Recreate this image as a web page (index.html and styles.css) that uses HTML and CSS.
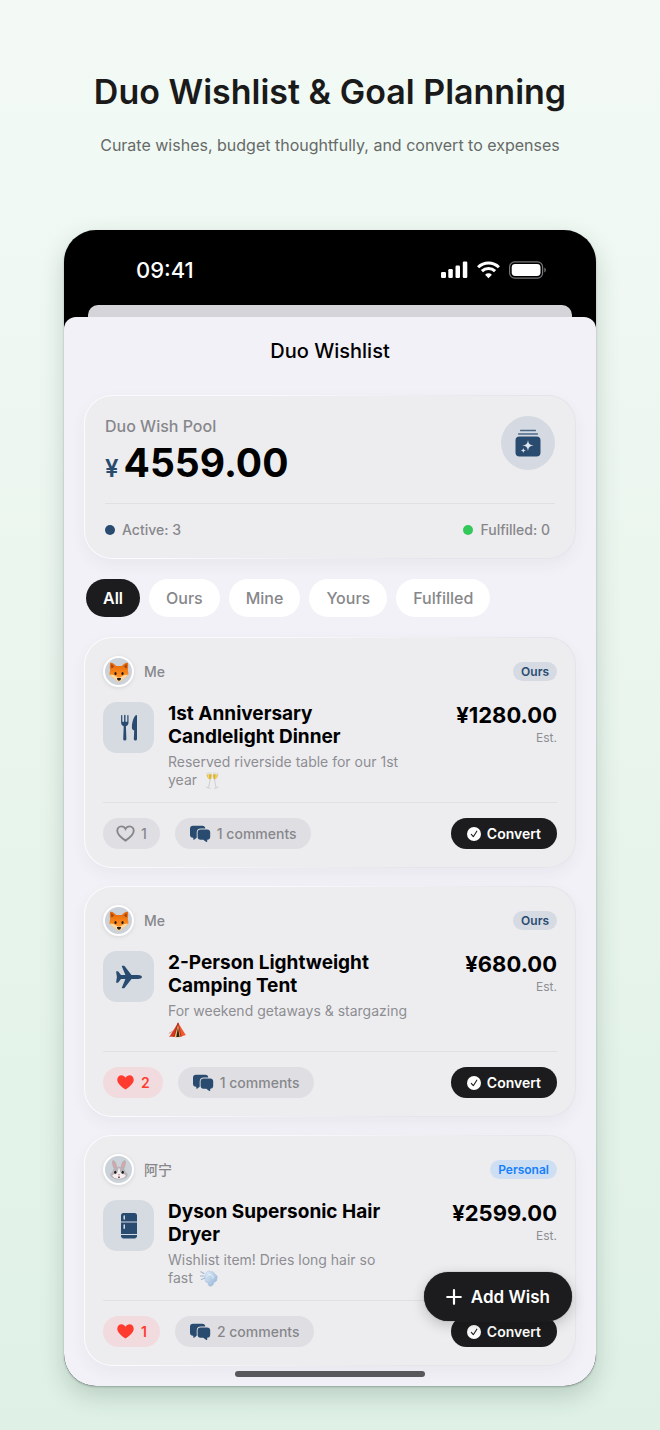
FILE: index.html
```html
<!DOCTYPE html>
<html lang="en">
<head>
<meta charset="utf-8">
<meta name="viewport" content="width=device-width, initial-scale=1">
<title>Duo Wishlist &amp; Goal Planning</title>
<link rel="stylesheet" href="styles.css">
</head>
<body>
<svg class="sprite" aria-hidden="true">
  <defs>
    <linearGradient id="foxFur" x1="0" y1="0" x2="0" y2="1"><stop offset="0" stop-color="#e2650c"/><stop offset=".6" stop-color="#f98a1c"/><stop offset="1" stop-color="#ffa94a"/></linearGradient>
    <linearGradient id="puff" x1="0" y1="0" x2="1" y2="1"><stop offset="0" stop-color="#e4f0fb"/><stop offset="1" stop-color="#8fb0d4"/></linearGradient>
  </defs>
  <symbol id="fox" viewBox="0 0 20 20">
    <path d="M1.400 .7C.8 1 .6 5 1.200 8c-.5 2.300-1 4-.4 5 1.600 2.200 5.200 4 7.400 6.200.9.800 2.700.800 3.600 0 2.200-2.200 5.800-4 7.400-6.200.6-1 .1-2.700-.4-5 .6-3 .4-7-.2-7.300C16.500.3 14 2.500 12.800 4h-5.600C6 2.500 3.500.3 1.400.7z" fill="url(#foxFur)"/>
    <path d="M2.300 2.200c-.3 1.800-.1 3.300.3 4.300.9-.9 1.900-1.300 2.400-1.800-.8-.9-1.600-2.100-2.700-2.500zM17.700 2.200c.3 1.800.1 3.300-.3 4.300-.9-.9-1.900-1.300-2.400-1.800.8-.9 1.600-2.100 2.700-2.500z" fill="#a3420f"/>
    <path d="M.8 13c1.600-.5 3.900-.1 5.900 1.300L10 16l3.300-1.700c2-1.400 4.300-1.800 5.900-1.300-1.600 2.200-5.200 4-7.400 6.200-.9.800-2.700.8-3.600 0C6 17 2.400 15.200.8 13z" fill="#f9d9a6"/>
    <path d="M8 16h4c.3 1.300-1.200 2.800-2 2.800S7.700 17.300 8 16z" fill="#251a18"/>
    <ellipse cx="6.500" cy="11.600" rx="1.100" ry="1.500" fill="#26150d"/><ellipse cx="13.500" cy="11.600" rx="1.100" ry="1.500" fill="#26150d"/>
  </symbol>
  <symbol id="rabbit" viewBox="0 0 20 20">
    <path d="M5 9C3 5 2.500 1 4 .3 6 0 8 4 8 7.500h4C12 4 14 0 16 .3c1.500.7 1 4.700-1 8.700z" fill="#b9adb0"/>
    <path d="M5.500 7.500C4.300 4.600 3.900 2.300 4.500 1.700c1.100.2 2.400 3 2.400 5.500zM14.500 7.500c1.200-2.900 1.600-5.200 1-5.800-1.100.2-2.400 3-2.400 5.500z" fill="#e0a3a8"/>
    <path d="M10 6.800c-4.500 0-6 2.600-6.600 5.200C2.700 12.700 1 13.500 1.300 15c.5 2.800 4.500 4.500 8.700 4.500s8.200-1.700 8.700-4.500c.3-1.500-1.400-2.300-2.100-3-.6-2.600-2.100-5.200-6.600-5.200z" fill="#b9b2b6"/>
    <path d="M10 7.500c-1 1.500-.8 4-2 5.800-1.500.8-4.300 1-4.700 2.200.7 2.200 3.900 3.200 6.700 3.200s6-1 6.700-3.200c-.4-1.200-3.200-1.400-4.700-2.200-1.200-1.800-1-4.300-2-5.800z" fill="#f3f0f1"/>
    <ellipse cx="6.300" cy="12.300" rx="1.100" ry="1.500" fill="#18171b"/><ellipse cx="13.700" cy="12.300" rx="1.100" ry="1.500" fill="#18171b"/>
    <path d="M8.800 14.300h2.400L10 15.700z" fill="#e36f84"/><path d="M9.200 16.500h1.600v1.500H9.200z" fill="#7b2a35"/>
  </symbol>
  <symbol id="glasses" viewBox="0 0 16 17">
    <g id="flute"><path d="M2.500 1.400 7 .5c1 2.700.9 6-.8 7.300-2-.6-3.600-3.300-3.700-6.400z" fill="#e9e7dd" stroke="#cfcabb" stroke-width=".4"/><path d="M2.800 3 7.200 2c.5 2.300.3 4.500-1 5.500C4.500 6.900 3.200 5.200 2.800 3z" fill="#dfb32c"/><path d="M3.600 3.200 5 2.900c0 1.600.3 2.900.7 3.900-1-.6-1.800-2-2.100-3.600z" fill="#f6dd74"/><path d="M6.100 7.800 4.600 15.200M2.400 15.300l4 1" fill="none" stroke="#c9c9cc" stroke-width=".9"/></g>
    <use href="#flute" transform="matrix(-1 0 0 1 16.600 0)"/>
  </symbol>
  <symbol id="tent" viewBox="0 0 18 16">
    <path d="M9.600.8 1 14.500l7.500.8z" fill="#d93b22"/><path d="M9.600.8 17.300 13l-6.800 2.200z" fill="#f1592f"/><path d="M9.600 2.500 6 15l5.800.2z" fill="#efc46a"/><path d="M9.500 5 7.800 15.100l3.300-.2z" fill="#31251d"/><path d="m9.600.8 3 14M9.600.8 5.300 15" stroke="#a92716" stroke-width=".8" fill="none"/><path d="M.3 11.500 4.500 9M.5 14.800l1.500-.6" stroke="#c96843" stroke-width=".6"/>
  </symbol>
  <symbol id="dash" viewBox="0 0 18 17">
    <path d="M6 4.600C5.600 1.600 9 .2 10.600 1.900c2-.8 4 .3 3.900 2.400 2.200.3 3.500 2.600 2.300 4.400.4 2-1 3.400-2.900 3.300.2 2.400-1.800 4.700-4.400 4-1.700-.6-1.700-2.400-.6-3.200C6 13 4.500 11 5.700 9.200c-1.600-1-1.400-3.800.3-4.600z" fill="url(#puff)" stroke="#9db6d2" stroke-width=".5"/>
    <path d="M8 5.300c1-1.500 3-1.300 3.500.2 1.500.2 2.200 1.600 1.500 2.800" fill="none" stroke="#f5faff" stroke-width="1" stroke-linecap="round" opacity=".8"/>
    <path d="M.8 1.800 4 3.500M.5 6h3.300M1.500 9.500 4.500 8.200" stroke="#9db8d4" stroke-width="1.200" stroke-linecap="round"/>
  </symbol>
  <symbol id="fork" viewBox="0 0 18 28">
    <path d="M1.100 1.500v7.200c0 2 1.200 3 2.600 3.600L3.200 25a1.600 1.600 0 0 0 3.200 0l-.5-12.700c1.400-.6 2.600-1.600 2.600-3.600V1.500a.6.6 0 0 0-1.200 0v6.300H5.500V1.400a.7.700 0 0 0-1.400 0v6.400H2.300V1.500a.6.6 0 0 0-1.200 0zM17 1.700v23.200a1.600 1.600 0 0 1-3.200 0l.4-8.400c-1.500-.6-2.300-1.300-2.300-3C11.900 7.500 14 2.500 16 1c.5-.3 1 0 1 .7z" fill="currentColor"/>
  </symbol>
  <symbol id="plane" viewBox="0 0 28 26">
    <path d="M27 13c0 1.200-2 2-4 2h-6.500l-6.800 8.700c-.3.400-.7.500-1.200.5H7.300c-.4 0-.6-.4-.4-.8L10.400 15H6l-2.700 3.400c-.2.300-.5.400-.8.400h-.9c-.3 0-.5-.3-.5-.6L1.900 13l-.8-5.200c0-.3.200-.6.500-.6h.9c.3 0 .6.100.8.400L6 11h4.400L6.900 2.600c-.2-.4 0-.8.400-.8h1.200c.5 0 .9.100 1.200.5l6.800 8.700H23c2 0 4 .8 4 2z" fill="currentColor"/>
  </symbol>
  <symbol id="fridge" viewBox="0 0 18 28">
    <path d="M1 9.500V3.400C1 1.900 1.900 1 3.400 1h11.200C16.100 1 17 1.900 17 3.400v6.100zM1 10.600h16V22H1zM1 23.100h16v.9c0 1.200-.6 1.900-1.600 2.100v.5H2.600v-.5C1.600 25.900 1 25.200 1 24z" fill="currentColor"/><path d="M4.200 4v3M4.200 13v3.300" stroke="#eceff4" stroke-width="1.300" stroke-linecap="round"/>
  </symbol>
  <symbol id="bubbles" viewBox="0 0 22 18">
    <path d="M4 .8h9.400c1.700 0 2.800 1 2.900 2.600h-4.600c-2.500 0-4 1.500-4 4v5.300l-2.600 2c-.4.300-.8.100-.8-.4v-1.600H4C2.100 12.700 1 11.500 1 9.700V3.800C1 2 2.100.8 4 .8z" fill="currentColor"/>
    <path d="M11.500 4.400h6.700c1.900 0 3 1.100 3 2.900v4.500c0 1.800-1.100 2.900-3 2.900v1.800c0 .5-.5.700-.9.400l-3-2.200h-2.800c-1.800 0-2.900-1.100-2.900-2.900V7.300c0-1.800 1.100-2.900 2.900-2.900z" fill="currentColor"/>
  </symbol>
  <symbol id="heart" viewBox="0 0 20 18">
    <path d="M10 16.500C5.800 13.800 1.300 10.300 1.300 6.200c0-2.700 1.900-4.800 4.400-4.800 1.800 0 3.400 1 4.300 2.700.9-1.700 2.500-2.700 4.300-2.700 2.500 0 4.400 2.100 4.400 4.800 0 4.100-4.500 7.600-8.700 10.300z"/>
  </symbol>
  <symbol id="check" viewBox="0 0 14 14">
    <circle cx="7" cy="7" r="7" fill="#fff"/><path d="m4.300 7.300 2 2.400 3.500-5.500" fill="none" stroke="#1c1c1e" stroke-width="1.100" stroke-linecap="round" stroke-linejoin="round"/>
  </symbol>
</svg>

<header class="hero">
  <h1 class="hero-title">Duo Wishlist &amp; Goal Planning</h1>
  <p class="hero-subtitle">Curate wishes, budget thoughtfully, and convert to expenses</p>
</header>

<main class="phone">
  <div class="status-bar">
    <span class="clock">09:41</span>
    <div class="status-icons">
      <svg width="27" height="18" viewBox="0 0 27 18" fill="#fff" aria-label="Signal"><rect x="0" y="11" width="5" height="6" rx="1.200"/><rect x="7.300" y="8" width="4.500" height="9" rx="1.200"/><rect x="14.500" y="4.500" width="4.500" height="12.500" rx="1.200"/><rect x="21.800" y="0.500" width="4.500" height="16.500" rx="1.200"/></svg>
      <svg width="23" height="18" viewBox="0 0 23 18" aria-label="Wi-Fi"><g fill="none" stroke="#fff" stroke-width="3"><path d="M1.100 6.200a14.900 14.900 0 0 1 20.800 0"/><path d="M4.900 10.200a9.500 9.500 0 0 1 13.200 0"/></g><path d="M11.500 17.200 8.100 13.700a4.900 4.900 0 0 1 6.800 0z" fill="#fff"/></svg>
      <svg width="38" height="18" viewBox="0 0 38 18" aria-label="Battery"><rect x=".6" y=".9" width="33" height="16.200" rx="5" fill="none" stroke="#77777a" stroke-width="1.200"/><rect x="2.700" y="3" width="28.800" height="12" rx="3.400" fill="#fff"/><path d="M35.300 6.500c2 .8 2 4.200 0 5z" fill="#77777a"/></svg>
    </div>
  </div>
  <div class="sheet-behind"></div>
  <div class="sheet">
    <h2 class="sheet-title">Duo Wishlist</h2>

    <section class="card pool">
      <div class="pool-top">
        <div>
          <div class="pool-label">Duo Wish Pool</div>
          <div class="pool-total"><span class="pool-currency">¥</span><span>4559.00</span></div>
        </div>
        <div class="pool-icon">
          <svg width="26" height="28" viewBox="0 0 26 28" aria-hidden="true"><path d="M5.600 1.500h14.800M3.600 5h18.800" stroke="#4a6888" stroke-width="1.500" stroke-linecap="round"/><rect x=".5" y="7.500" width="25" height="20" rx="4" fill="#2a4b70"/><path d="M13 11c.6 4 1.500 5 5.800 5.600-4.300.6-5.200 1.600-5.800 5.800-.6-4.200-1.500-5.200-5.800-5.800C11.500 16 12.400 15 13 11zM8.300 18.800c.3 2 .8 2.400 2.800 2.700-2 .3-2.500.8-2.800 2.800-.3-2-.8-2.500-2.800-2.800 2-.3 2.500-.7 2.800-2.700z" fill="#dfe5ee"/></svg>
        </div>
      </div>
      <div class="pool-stats">
        <span class="stat"><i class="dot dot-active"></i>Active: 3</span>
        <span class="stat"><i class="dot dot-done"></i>Fulfilled: 0</span>
      </div>
    </section>

    <nav class="filters" aria-label="Filter wishes">
      <button class="chip chip-on" type="button">All</button>
      <button class="chip" type="button">Ours</button>
      <button class="chip" type="button">Mine</button>
      <button class="chip" type="button">Yours</button>
      <button class="chip" type="button">Fulfilled</button>
    </nav>

    <div class="wishes">
      <article class="card wish">
        <div class="owner"><span class="avatar"><svg width="20" height="20" role="img" aria-label="Fox"><use href="#fox"/></svg></span><span class="owner-name">Me</span><span class="tag">Ours</span></div>
        <div class="detail">
          <div class="category"><svg width="18" height="28" aria-hidden="true"><use href="#fork"/></svg></div>
          <div class="copy"><h3 class="wish-title">1st Anniversary Candlelight Dinner</h3><p class="note">Reserved riverside table for our 1st <span class="keep">year <svg class="emoji" width="16" height="17" role="img" aria-label="Clinking glasses"><use href="#glasses"/></svg></span></p></div>
          <div class="cost"><div class="price">¥1280.00</div><div class="est">Est.</div></div>
        </div>
        <div class="actions">
          <button class="pill" type="button" aria-label="Like, 1"><svg class="heart" width="19" height="17"><use href="#heart"/></svg>1</button>
          <button class="pill comments" type="button"><svg class="bubbles" width="22" height="18"><use href="#bubbles"/></svg>1 comments</button>
          <button class="convert" type="button"><svg width="14" height="14"><use href="#check"/></svg>Convert</button>
        </div>
      </article>

      <article class="card wish">
        <div class="owner"><span class="avatar"><svg width="20" height="20" role="img" aria-label="Fox"><use href="#fox"/></svg></span><span class="owner-name">Me</span><span class="tag">Ours</span></div>
        <div class="detail">
          <div class="category"><svg width="28" height="26" aria-hidden="true"><use href="#plane"/></svg></div>
          <div class="copy"><h3 class="wish-title">2-Person Lightweight Camping Tent</h3><p class="note">For weekend getaways &amp; stargazing <svg class="emoji emoji-alone" width="19" height="16" role="img" aria-label="Tent"><use href="#tent"/></svg></p></div>
          <div class="cost"><div class="price">¥680.00</div><div class="est">Est.</div></div>
        </div>
        <div class="actions">
          <button class="pill liked" type="button" aria-label="Liked, 2"><svg class="heart" width="19" height="17"><use href="#heart"/></svg>2</button>
          <button class="pill comments" type="button"><svg class="bubbles" width="22" height="18"><use href="#bubbles"/></svg>1 comments</button>
          <button class="convert" type="button"><svg width="14" height="14"><use href="#check"/></svg>Convert</button>
        </div>
      </article>

      <article class="card wish">
        <div class="owner"><span class="avatar"><svg width="20" height="20" role="img" aria-label="Rabbit"><use href="#rabbit"/></svg></span><span class="owner-name" lang="zh">阿宁</span><span class="tag tag-personal">Personal</span></div>
        <div class="detail">
          <div class="category"><svg width="18" height="28" aria-hidden="true"><use href="#fridge"/></svg></div>
          <div class="copy"><h3 class="wish-title">Dyson Supersonic Hair Dryer</h3><p class="note">Wishlist item! Dries long hair so <span class="keep">fast <svg class="emoji" width="18" height="17" role="img" aria-label="Puff of air"><use href="#dash"/></svg></span></p></div>
          <div class="cost"><div class="price">¥2599.00</div><div class="est">Est.</div></div>
        </div>
        <div class="actions">
          <button class="pill liked" type="button" aria-label="Liked, 1"><svg class="heart" width="19" height="17"><use href="#heart"/></svg>1</button>
          <button class="pill comments" type="button"><svg class="bubbles" width="22" height="18"><use href="#bubbles"/></svg>2 comments</button>
          <button class="convert" type="button"><svg width="14" height="14"><use href="#check"/></svg>Convert</button>
        </div>
      </article>
    </div>
  </div>
  <button class="add" type="button"><svg width="16" height="16" viewBox="0 0 16 16" aria-hidden="true"><path d="M8 1.200v13.600M1.200 8h13.600" stroke="#fff" stroke-width="2.200" stroke-linecap="round"/></svg>Add Wish</button>
  <div class="home-bar"></div>
</main>
</body>
</html>
```

FILE: styles.css
```css
:root {
  --navy: #2a4b70;
  --ink: #1c1c1e;
  --grey: #87878b;
  --line: #e0e0e3;
}

* { box-sizing: border-box; }

body {
  margin: 0;
  padding: 71px 64px 45px;
  min-height: 100vh;
  font-family: Inter, "Noto Sans CJK SC", sans-serif;
  color: #000;
  background: linear-gradient(180deg, #f3faf6 0%, #e9f5ed 50%, #dff1e6 100%);
}

h1, h2, h3, p { margin: 0; }
button { border: 0; font: inherit; cursor: pointer; }
svg { display: block; flex: none; }
.sprite { position: absolute; width: 0; height: 0; }

.hero { text-align: center; margin-bottom: 74px; }
.hero-title { font-size: 34px; line-height: 42px; font-weight: 600; color: #1a1a1a; white-space: nowrap; }
.hero-subtitle { margin-top: 21px; font-size: 16px; line-height: 22px; color: #666a68; white-space: nowrap; }

.phone {
  position: relative;
  overflow: hidden;
  border-radius: 32px;
  background: #000;
  box-shadow: 0 10px 24px rgba(30, 60, 45, .2), 0 1px 2px rgba(30, 60, 45, .3);
}

.status-bar { display: flex; justify-content: space-between; align-items: center; height: 75px; padding: 4px 49px 0 72px; }
.clock { color: #fff; font-size: 22px; font-weight: 500; line-height: 26px; }
.status-icons { display: flex; align-items: center; gap: 9px; }
.sheet-behind { height: 24px; margin: 0 24px -12px; border-radius: 10px 10px 0 0; background: #d5d4d9; }
.sheet { position: relative; padding: 20px 20px; border-radius: 12px 12px 0 0; background: #f2f1f7; }
.sheet-title { text-align: center; font-size: 20px; line-height: 28px; font-weight: 500; }

.card {
  border: 1px solid transparent;
  border-radius: 28px;
  background:
    linear-gradient(#ededf0, #ededf0) padding-box,
    linear-gradient(120deg, #fbfbfd 30%, #e5e5e9 75%) border-box;
  box-shadow: 0 6px 16px rgba(60, 60, 90, .05);
}

.pool { margin-top: 30px; padding: 20px 20px 18px; }
.pool-top { display: flex; justify-content: space-between; padding-bottom: 10px; border-bottom: 1px solid var(--line); }
.pool-label { color: var(--grey); font-size: 16px; line-height: 20px; font-weight: 500; }
.pool-total { display: flex; align-items: baseline; gap: 5px; margin-top: 3px; font-size: 39px; line-height: 48px; font-weight: 700; }
.pool-currency { color: var(--navy); font-size: 24px; font-weight: 600; }
.pool-icon { display: grid; place-items: center; width: 54px; height: 54px; border-radius: 50%; background: #d5dae2; }
.pool-stats { display: flex; justify-content: space-between; padding: 16px 5px 0 0; }
.stat { display: flex; align-items: center; gap: 7px; color: var(--grey); font-size: 14px; line-height: 20px; font-weight: 500; }
.dot { width: 10px; height: 10px; border-radius: 50%; }
.dot-active { background: var(--navy); }
.dot-done { background: #34c759; }

.filters { display: flex; gap: 9px; margin: 20px 2px; }
.chip { height: 38px; padding: 0 17px; border-radius: 19px; background: #fff; color: var(--grey); font-size: 16px; font-weight: 500; }
.chip-on { background: var(--ink); color: #fff; font-weight: 600; }

.wishes { display: flex; flex-direction: column; gap: 18px; }
.wish { padding: 18px; }
.owner { display: flex; align-items: center; gap: 10px; }
.avatar { display: grid; place-items: center; width: 31px; height: 31px; border: 2px solid #fff; border-radius: 50%; background: #ccd2d9; box-shadow: 0 1px 4px rgba(0, 0, 0, .1); }
.owner-name { color: var(--grey); font-size: 14px; line-height: 20px; font-weight: 500; }
.tag { margin-left: auto; padding: 0 8px; border-radius: 10px; background: #d6dbe3; color: var(--navy); font-size: 12px; line-height: 19px; font-weight: 600; }
.tag-personal { background: #cfdff3; color: #1680fb; }

.detail { display: flex; margin-top: 15px; padding-bottom: 13px; border-bottom: 1px solid var(--line); }
.category { display: grid; place-items: center; flex: none; width: 51px; height: 51px; margin-right: 14px; border-radius: 14px; background: #d6dbe2; color: var(--navy); }
.copy { flex: 0 1 250px; }
.wish-title { font-size: 19px; line-height: 23px; font-weight: 700; }
.note { margin-top: 5px; color: #8e8e92; font-size: 14px; line-height: 18px; }
.keep { white-space: nowrap; }
.emoji { display: inline-block; vertical-align: -4px; margin-left: 3px; }
.emoji-alone { margin-left: 0; }
.cost { margin-left: auto; text-align: right; }
.price { font-size: 22px; line-height: 26px; font-weight: 700; }
.est { margin-top: 2px; color: #8e8e92; font-size: 12px; line-height: 16px; }

.actions { display: flex; align-items: center; gap: 15px; margin-top: 15px; }
.pill, .convert { display: flex; align-items: center; height: 31px; border-radius: 16px; }
.pill { gap: 6px; padding: 0 13px; background: #dfdfe3; color: var(--grey); font-size: 14px; font-weight: 500; }
.comments { padding: 0 14px; }
.bubbles { color: var(--navy); }
.heart { fill: none; stroke: var(--grey); stroke-width: 2px; }
.liked { background: #f2dbde; color: #ff3b30; font-weight: 600; }
.liked .heart { fill: #ff3b30; stroke: none; }
.convert { gap: 6px; margin-left: auto; padding: 0 16px; background: var(--ink); color: #fff; font-size: 14px; font-weight: 600; }

.add {
  position: absolute;
  right: 24px;
  bottom: 65px;
  display: flex;
  align-items: center;
  gap: 9px;
  height: 49px;
  padding: 0 22px;
  border-radius: 25px;
  background: var(--ink);
  color: #fff;
  font-size: 17px;
  font-weight: 600;
  box-shadow: 0 4px 14px rgba(0, 0, 0, .2), 0 0 1px #555;
}
.home-bar { position: absolute; left: 50%; bottom: 9px; width: 190px; height: 6px; margin-left: -95px; border-radius: 3px; background: #58585b; }
```
